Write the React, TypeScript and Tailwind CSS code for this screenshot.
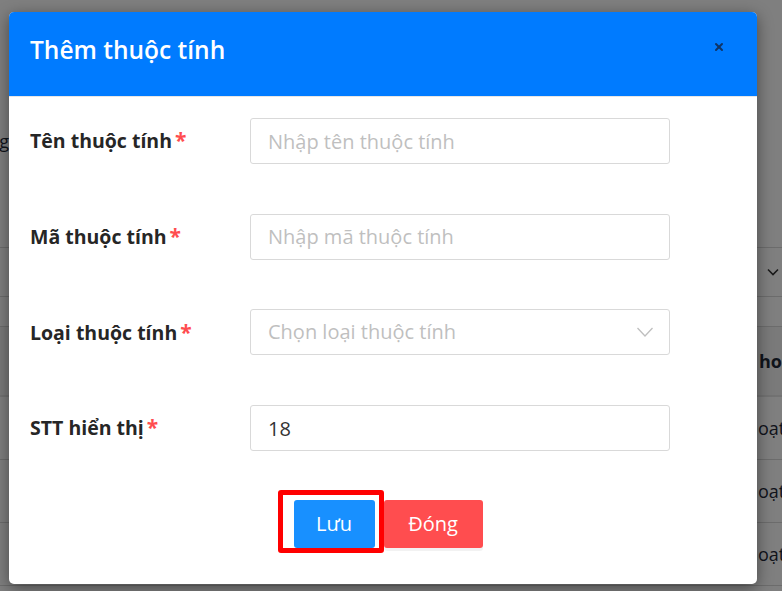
import { X } from "lucide-react";

const FONT = "font-['Open_Sans',_'Noto_Sans',_sans-serif]";

const FIELDS = [
  { label: "Tên thuộc tính", placeholder: "Nhập tên thuộc tính", kind: "input" },
  { label: "Mã thuộc tính", placeholder: "Nhập mã thuộc tính", kind: "input" },
  { label: "Loại thuộc tính", placeholder: "Chọn loại thuộc tính", kind: "select" },
  { label: "STT hiển thị", placeholder: "", value: "18", kind: "input" },
];

function BackgroundPage() {
  // the page behind the dialog, only its edges stay visible
  return (
    <div className={`h-[591px] w-[782px] overflow-hidden bg-white text-[18px] text-[#1f2937] ${FONT}`}>
      <div className="flex h-[247px] items-start pt-[128px]">
        <div className="flex w-[9px] justify-end">
          <span className="whitespace-nowrap">Tìm kiếm theo tên đang</span>
        </div>
      </div>
      <div className="flex h-[50px] items-center justify-end border-y border-[#d9d9d9] pr-[2px]">
        <svg width="14" height="14" viewBox="0 0 14 14" fill="none" stroke="#333" strokeWidth="1.6">
          <path d="M2 4.5 7 9.5 12 4.5" />
        </svg>
      </div>
      <div className="h-[30px] border-b border-[#d9d9d9]" />
      <div className="flex h-[70px] items-center border-b-2 border-[#e5e5e5] bg-[#f5f5f5] pl-[759px] font-bold">
        <span className="whitespace-nowrap">hoạt động</span>
      </div>
      {[0, 1, 2].map((i) => (
        <div key={i} className="flex h-[63px] items-center border-b border-[#d9d9d9] pl-[747px]">
          <span className="whitespace-nowrap">hoạt động</span>
        </div>
      ))}
    </div>
  );
}

export default function App() {
  return (
    <div className="relative h-[591px] w-[782px] overflow-hidden">
      <BackgroundPage />
      <div className="absolute inset-0 bg-black/50" />
      <div className="absolute inset-0 pl-[9px] pt-[12px]">
        <div className={`w-[748px] overflow-hidden rounded-[5px] bg-white shadow-[0_4px_16px_rgba(0,0,0,0.45)] ${FONT}`}>
          <div className="flex h-[85px] items-center justify-between border-b border-[#e6e6e6] bg-[#007bff] pl-[21px] pr-[32px]">
            <h2 className="pb-[7px] text-[24.5px] font-semibold text-white">Thêm thuộc tính</h2>
            <button type="button" className="mb-[14px] text-[#0f3466]">
              <X size={12} strokeWidth={4} />
            </button>
          </div>

          <div className="flex flex-col gap-[49.7px] pl-[21px] pt-[21px]">
            {FIELDS.map((f) => (
              <div key={f.label} className="flex h-[46px] items-center">
                <label className="w-[220px] text-[19.5px] font-bold text-[#262626]">
                  {f.label}
                  <span className="ml-[3px] text-[21px] text-[#ff4d4f]">*</span>
                </label>
                {f.kind === "select" ? (
                  <div className="flex h-[46px] w-[420px] items-center justify-between rounded-[3px] border border-[#d9d9d9] pl-[17px] pr-[15px] text-[20px] text-[#bfbfbf]">
                    <span>{f.placeholder}</span>
                    <svg width="18" height="18" viewBox="0 0 18 18" fill="none" stroke="#bfbfbf" strokeWidth="1.3">
                      <path d="M1.5 5 9 13 16.5 5" />
                    </svg>
                  </div>
                ) : (
                  <input
                    defaultValue={f.value}
                    placeholder={f.placeholder}
                    className="h-[46px] w-[420px] rounded-[3px] border border-[#d9d9d9] px-[17px] text-[20px] text-[#333] outline-none placeholder:text-[#bfbfbf]"
                  />
                )}
              </div>
            ))}
          </div>

          <div className="flex items-start justify-center pb-[31px] pr-[6px] pt-[39px]">
            <div className="rounded-[3px] border-[5px] border-[#ff0000] pl-[11px] pr-[4px] pt-[5px]">
              <button type="button" className="block h-[48px] w-[81px] rounded-[3px] bg-[#1890ff] text-[20px] text-white">
                Lưu
              </button>
            </div>
            <div className="pt-[10px]">
              <button type="button" className="block h-[48px] w-[99px] rounded-[3px] bg-[#ff4d4f] text-[20px] text-white shadow-[0_3px_0_rgba(0,0,0,0.05)]">
                Đóng
              </button>
            </div>
          </div>
        </div>
      </div>
    </div>
  );
}
